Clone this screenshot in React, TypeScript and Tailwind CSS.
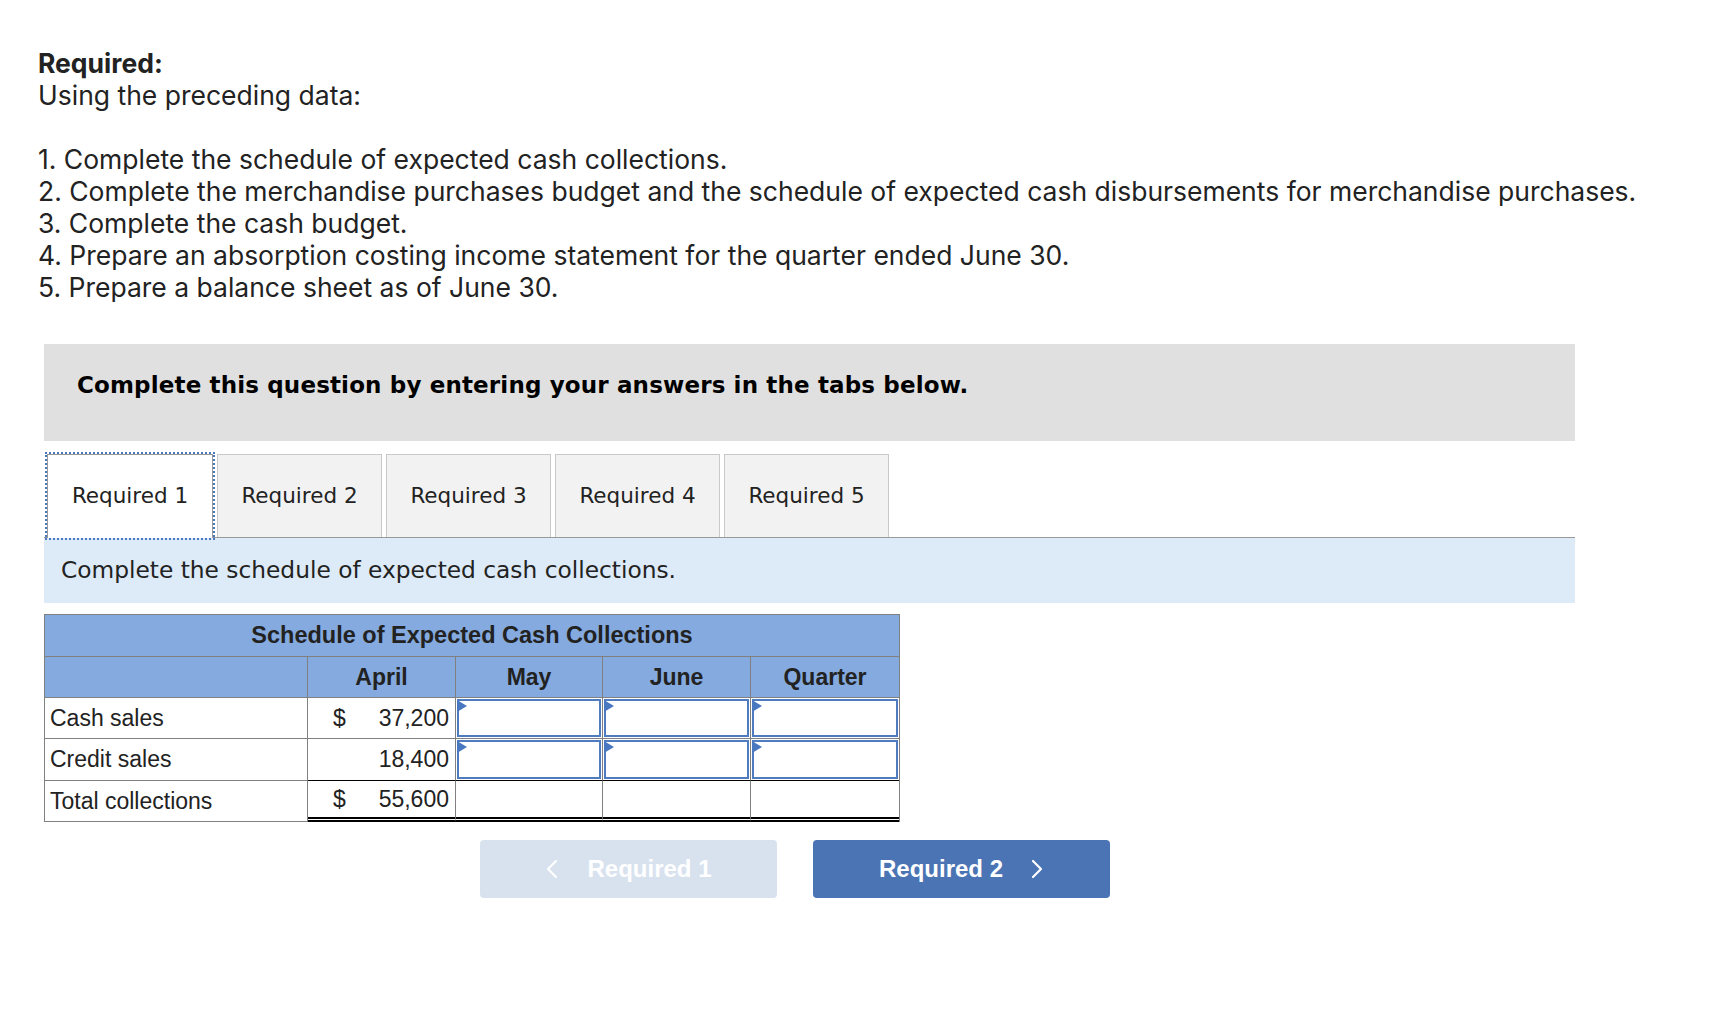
import React from 'react';

const tabs = ['Required 1', 'Required 2', 'Required 3', 'Required 4', 'Required 5'];

const steps = [
  '1. Complete the schedule of expected cash collections.',
  '2. Complete the merchandise purchases budget and the schedule of expected cash disbursements for merchandise purchases.',
  '3. Complete the cash budget.',
  '4. Prepare an absorption costing income statement for the quarter ended June 30.',
  '5. Prepare a balance sheet as of June 30.',
];

const InputCell: React.FC<{ last?: boolean; bottomBlack?: boolean }> = ({ last, bottomBlack }) => (
  <div
    className={`relative h-full p-[1px] ${last ? '' : 'border-r border-[#808080]'} ${
      bottomBlack ? 'border-b border-b-[#000]' : 'border-b border-[#808080]'
    }`}
  >
    <div className="h-full w-full border-2 border-[#4f7bbf] bg-white" />
    <svg className="absolute left-[1px] top-[2px]" width="10" height="12" viewBox="0 0 10 12">
      <polygon points="0,0 10,6 0,12" fill="#4a78c0" />
    </svg>
  </div>
);

const Chevron: React.FC<{ dir: 'left' | 'right' }> = ({ dir }) => (
  <svg width="13" height="20" viewBox="0 0 13 20" fill="none">
    <polyline
      points={dir === 'left' ? '11,2 3,10 11,18' : '2,2 10,10 2,18'}
      stroke="white"
      strokeWidth="2.2"
      strokeLinecap="round"
      strokeLinejoin="round"
    />
  </svg>
);

const App: React.FC = () => {
  return (
    <div className="min-h-screen bg-white pb-[100px] text-[#222]">
      {/* Question text */}
      <div className="pl-[38px] pt-[47px] text-[26.5px] leading-[32px]" style={{ fontFamily: 'Inter, "Open Sans", sans-serif' }}>
        <p className="font-bold">Required:</p>
        <p>Using the preceding data:</p>
        <div className="h-8" />
        {steps.map((s) => (
          <p key={s}>{s}</p>
        ))}
      </div>

      {/* Instruction box */}
      <div
        className="ml-[44px] mt-[41px] h-[97px] w-[1531px] bg-[#e0e0e0] pl-[33px] pt-[28px] text-[23px] font-bold leading-[26px] tracking-[0.15px] text-black"
        style={{ fontFamily: '"DejaVu Sans", Verdana, sans-serif' }}
      >
        Complete this question by entering your answers in the tabs below.
      </div>

      {/* Tabs */}
      <div
        className="ml-[44px] mt-[13px] flex w-[1531px] items-end gap-[4px] border-b border-[#999] pl-[3px] text-[21.5px]"
        style={{ fontFamily: '"DejaVu Sans", Verdana, sans-serif' }}
      >
        {tabs.map((t, i) =>
          i === 0 ? (
            <div
              key={t}
              className="-mb-px flex h-[84px] w-[166px] items-center justify-center border border-b-0 border-[#999] bg-white outline-2 outline-dotted outline-[#4a78c0]"
            >
              {t}
            </div>
          ) : (
            <div
              key={t}
              className="flex h-[83px] w-[165px] items-center justify-center border border-b-0 border-[#c9c9c9] bg-[#f2f2f2]"
            >
              {t}
            </div>
          )
        )}
      </div>

      {/* Sub-heading bar */}
      <div
        className="ml-[44px] flex h-[65px] w-[1531px] items-center bg-[#ddeaf7] pl-[17px] text-[23.3px]"
        style={{ fontFamily: '"DejaVu Sans", Verdana, sans-serif' }}
      >
        Complete the schedule of expected cash collections.
      </div>

      {/* Schedule table */}
      <div
        className="ml-[44px] mt-[11px] w-[856px] border-l border-r border-t border-[#808080] text-[23px]"
        style={{ fontFamily: '"Liberation Sans", Arial, sans-serif' }}
      >
        <div className="flex h-[42px] items-center justify-center border-b border-[#808080] bg-[#84aadf] text-[23.5px] font-bold">
          Schedule of Expected Cash Collections
        </div>
        <div className="grid h-[41px] grid-cols-[263px_148px_147px_148px_148px] bg-[#84aadf] font-bold">
          <div className="border-b border-r border-[#808080]" />
          <div className="flex items-center justify-center border-b border-r border-[#808080]">April</div>
          <div className="flex items-center justify-center border-b border-r border-[#808080]">May</div>
          <div className="flex items-center justify-center border-b border-r border-[#808080]">June</div>
          <div className="flex items-center justify-center border-b border-[#808080]">Quarter</div>
        </div>

        {/* Cash sales */}
        <div className="grid h-[41px] grid-cols-[263px_148px_147px_148px_148px]">
          <div className="flex items-center border-b border-r border-[#808080] pl-[5px]">Cash sales</div>
          <div className="flex items-center justify-between border-b border-r border-[#808080] pl-[25px] pr-[6px]">
            <span>$</span>
            <span>37,200</span>
          </div>
          <InputCell />
          <InputCell />
          <InputCell last />
        </div>

        {/* Credit sales */}
        <div className="grid h-[42px] grid-cols-[263px_148px_147px_148px_148px]">
          <div className="flex items-center border-b border-r border-[#808080] pl-[5px]">Credit sales</div>
          <div className="flex items-center justify-end border-b border-r border-b-black border-r-[#808080] pr-[6px]">
            18,400
          </div>
          <InputCell bottomBlack />
          <InputCell bottomBlack />
          <InputCell last bottomBlack />
        </div>

        {/* Total collections */}
        <div className="grid h-[41px] grid-cols-[263px_148px_147px_148px_148px]">
          <div className="flex items-center border-b border-r border-[#808080] pl-[5px]">Total collections</div>
          <div className="flex items-center justify-between border-b-[5px] border-r border-double border-b-black border-r-[#808080] pl-[25px] pr-[6px]">
            <span>$</span>
            <span>55,600</span>
          </div>
          <div className="border-b-[5px] border-r border-double border-b-black border-r-[#808080]" />
          <div className="border-b-[5px] border-r border-double border-b-black border-r-[#808080]" />
          <div className="border-b-[5px] border-double border-b-black" />
        </div>
      </div>

      {/* Navigation buttons */}
      <div
        className="ml-[480px] mt-[18px] flex gap-[36px] text-[24px] font-bold text-white"
        style={{ fontFamily: '"Liberation Sans", Arial, sans-serif' }}
      >
        <button className="flex h-[58px] w-[297px] items-center justify-center gap-[29px] rounded-[4px] bg-[#d8e2ef]">
          <Chevron dir="left" />
          <span>Required 1</span>
        </button>
        <button className="flex h-[58px] w-[297px] items-center justify-center gap-[28px] rounded-[4px] bg-[#4a74b4]">
          <span>Required 2</span>
          <Chevron dir="right" />
        </button>
      </div>
    </div>
  );
};

export default App;
